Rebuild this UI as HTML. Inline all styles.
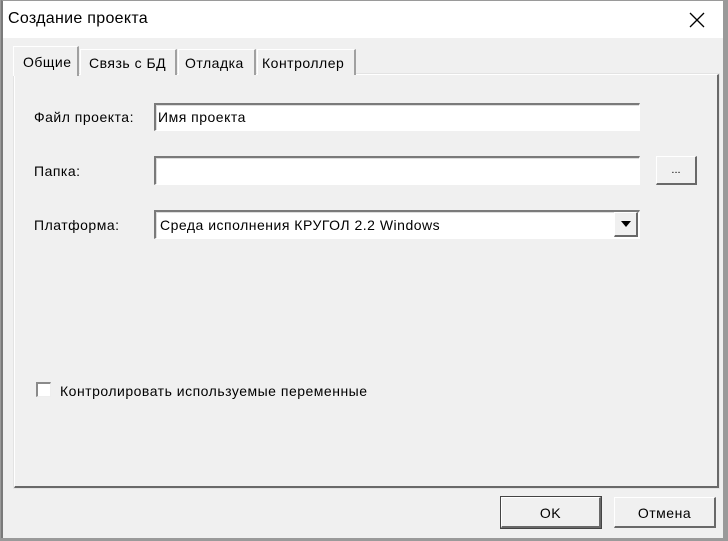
<!DOCTYPE html>
<html><head><meta charset="utf-8"><style>
*{margin:0;padding:0;box-sizing:border-box}
body{width:728px;height:541px;background:#9a9a9a;font-family:"Liberation Sans",sans-serif;font-size:14px;letter-spacing:0.5px;color:#000;position:relative;overflow:hidden}
.win{position:absolute;left:1px;top:0;width:722px;height:538px;background:#f0f0f0;border-left:2px solid #7a7a7a;border-top:1px solid #9a9a9a}
.title{position:absolute;left:0;top:0;width:720px;height:37px;background:#fff}
.title span{position:absolute;left:5px;top:9px;font-size:16px;letter-spacing:0.3px}
.x{position:absolute;left:686px;top:11px}
.a{position:absolute;white-space:nowrap}
.panel{position:absolute;left:11px;top:73px;width:705px;height:414px;border:1px solid #fff;border-right:2px solid #696969;border-bottom:2px solid #696969;outline:1px solid #e3e3e3}
.tab{position:absolute;top:48px;height:26px;border-left:1px solid #fff;border-top:1px solid #fff;border-right:2px solid #a0a0a0;padding:5px 0 0 3px;background:#f0f0f0;white-space:nowrap;overflow:hidden}
.inp{position:absolute;background:#fff;border-top:2px solid #7a7a7a;border-left:2px solid #7a7a7a;border-right:1px solid #fff;border-bottom:1px solid #fff;box-shadow:inset 1px 1px 0 #ddd;white-space:nowrap}
.btn{position:absolute;background:#f0f0f0;border-top:1px solid #fff;border-left:1px solid #fff;border-right:2px solid #696969;border-bottom:2px solid #696969;text-align:center}
</style></head><body>
<div class="win">
<div class="title"><span>Создание проекта</span><svg class="x" width="16" height="16" viewBox="0 0 16 16"><path d="M1 1L15 15M15 1L1 15" stroke="#000" stroke-width="1.3"/></svg></div>
<div class="panel"></div>
<div class="tab" style="left:10px;top:45px;height:30px;width:66px;padding:7px 0 0 9px;z-index:2">Общие</div>
<div class="tab" style="left:77px;width:97px;padding-left:8px">Связь с БД</div>
<div class="tab" style="left:175px;width:78px;padding-left:6px">Отладка</div>
<div class="tab" style="left:254px;width:99px;padding-left:4px">Контроллер</div>
<div class="a" style="left:31px;top:108px">Файл проекта:</div>
<div class="inp" style="left:151px;top:102px;width:486px;height:28px;padding:4px 0 0 2px">Имя проекта</div>
<div class="a" style="left:31px;top:162px">Папка:</div>
<div class="inp" style="left:151px;top:155px;width:486px;height:29px"></div>
<div class="btn" style="left:653px;top:155px;width:41px;height:29px;padding-top:7px;font-size:11px;letter-spacing:0">...</div>
<div class="a" style="left:31px;top:216px">Платформа:</div>
<div class="inp" style="left:151px;top:209px;width:486px;height:29px;padding:5px 0 0 4px">Среда исполнения КРУГОЛ 2.2 Windows</div>
<div class="btn" style="left:611px;top:211px;width:24px;height:25px;padding-top:8px;line-height:0"><svg width="10" height="6" viewBox="0 0 10 6"><path d="M0 0H10L5 6Z" fill="#000"/></svg></div>
<div class="a" style="left:33px;top:381px;width:15px;height:15px;background:#fff;border-top:2px solid #8a8a8a;border-left:2px solid #8a8a8a;border-right:1px solid #eee;border-bottom:1px solid #eee"></div>
<div class="a" style="left:57px;top:382px">Контролировать используемые переменные</div>
<div class="btn" style="left:498px;top:496px;width:100px;height:31px;padding-top:7px;border:1px solid #fff;border-right:2px solid #696969;border-bottom:2px solid #696969;outline:1px solid #444">OK</div>
<div class="btn" style="left:611px;top:496px;width:102px;height:31px;padding-top:7px">Отмена</div>
</div>
</body></html>
